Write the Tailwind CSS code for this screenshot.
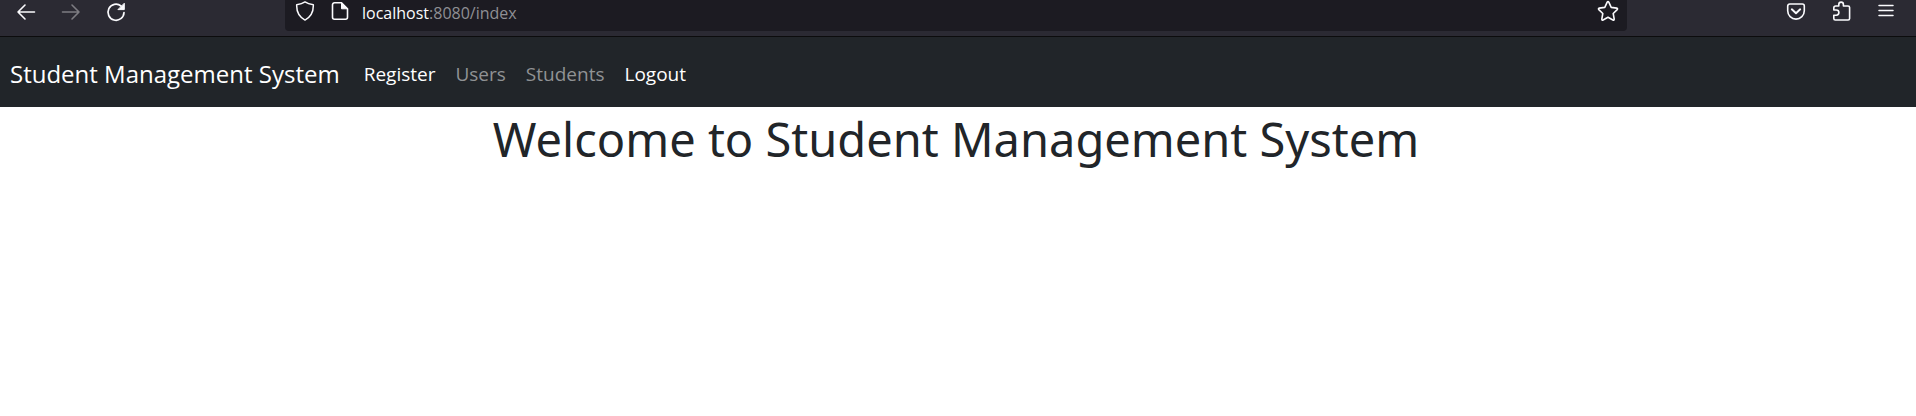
<!DOCTYPE html>
<html lang="en">
<head>
<meta charset="utf-8">
<title>Student Management System</title>
<script src="https://cdn.jsdelivr.net/npm/@tailwindcss/browser@4"></script>
</head>
<body class="min-h-screen bg-white font-['Segoe_UI','Open_Sans',sans-serif] text-[#212529]">
<header class="flex h-[37px] items-start border-b border-[#0c0c0d] bg-[#2b2a33] text-[#fbfbfe]">
  <div class="flex gap-px pl-1">
    <button aria-label="Back" class="flex h-6 w-11 items-center justify-center"><svg class="size-5" viewBox="0 0 20 20" fill="none" stroke="currentColor" stroke-width="1.6" stroke-linecap="round" stroke-linejoin="round"><path d="M18.500 10H2M9 3L2 10l7 7"/></svg></button>
    <button aria-label="Forward" disabled class="flex h-6 w-11 items-center justify-center text-[#7d7c82]"><svg class="size-5" viewBox="0 0 20 20" fill="none" stroke="currentColor" stroke-width="1.6" stroke-linecap="round" stroke-linejoin="round"><path d="M1.500 10H18M11 3l7 7-7 7"/></svg></button>
    <button aria-label="Reload" class="flex h-6 w-11 items-center justify-center"><svg class="size-5" viewBox="0 0 20 20" fill="none" stroke="currentColor" stroke-width="1.700" stroke-linecap="round"><path d="M18 10.500A8 8 0 1 1 15 4"/><path d="M18.300 1.600v6h-6z" fill="currentColor" stroke-width="1" stroke-linejoin="round"/></svg></button>
  </div>
  <div class="mx-[147px] flex h-[31px] flex-1 items-start rounded-b bg-[#1c1b22]">
    <button aria-label="Site protection" class="ml-2.5 flex h-[22px] w-5 items-center justify-center"><svg class="size-5" viewBox="0 0 20 20" fill="none" stroke="currentColor" stroke-width="1.500" stroke-linejoin="round"><path d="M10 .9C7.700 2.500 4.800 3.300 1.700 3.700c-.3 6.400 1.500 11.800 8.300 15.400 6.800-3.600 8.600-9 8.300-15.400C15.200 3.300 12.300 2.500 10 .9z"/></svg></button>
    <button aria-label="Site information" class="ml-[15px] flex h-[22px] w-5 items-center justify-center"><svg class="size-5" viewBox="0 0 20 20" fill="none" stroke="currentColor" stroke-width="1.600" stroke-linejoin="round"><path d="M11.500 1.800H4.500a2 2 0 0 0-2 2v12.400a2 2 0 0 0 2 2h11a2 2 0 0 0 2-2V7.800z"/><path d="M11.500 1.800v6h6z" fill="currentColor" stroke-width="1"/></svg></button>
    <a href="#" class="ml-3 text-base leading-[26px] text-[#8f8f94]"><span class="text-[#fbfbfe]">localhost</span>:8080/index</a>
    <button aria-label="Bookmark this page" class="mr-2 ml-auto flex h-[22px] w-[22px] items-center justify-center"><svg class="size-[22px]" viewBox="0 0 22 22" fill="none" stroke="currentColor" stroke-width="1.600" stroke-linejoin="round"><path d="M10.200 2.200q.8-1.300 1.600 0L14.200 7.400l5.500.7q1.400.4.5 1.500l-4 3.900 1 5.600q0 1.400-1.300.9L11 17.300 6.100 20q-1.300.5-1.300-.9l1-5.600-4-3.900q-.9-1.100.5-1.500l5.500-.7z"/></svg></button>
  </div>
  <div class="flex gap-px pr-2">
    <button aria-label="Save to Pocket" class="flex h-[22px] w-11 items-center justify-center"><svg class="size-5" viewBox="0 0 20 20" fill="none" stroke="currentColor" stroke-width="1.600" stroke-linecap="round" stroke-linejoin="round"><path d="M3.700 3h12.600a2 2 0 0 1 2 2v4.800a8.300 8.300 0 0 1-16.600 0V5a2 2 0 0 1 2-2z"/><path d="M5.800 8.300L10 12.300l4.200-4" stroke-width="1.900"/></svg></button>
    <button aria-label="Extensions" class="flex h-[22px] w-11 items-center justify-center"><svg class="size-5" viewBox="0 0 20 20" fill="none" stroke="currentColor" stroke-width="1.600" stroke-linejoin="round"><path d="M2.800 9V7a2 2 0 0 1 2-2H7.800V3.400a2.300 2.300 0 0 1 4.600 0V5H17.100a1.500 1.500 0 0 1 1.500 1.500v11a1.500 1.500 0 0 1-1.500 1.500H4.300a1.500 1.500 0 0 1-1.500-1.500v-3.300h2.500a2.600 2.600 0 0 0 0-5.200z"/></svg></button>
    <button aria-label="Open menu" class="flex h-[22px] w-11 items-center justify-center"><svg class="h-5 w-4" viewBox="0 0 16 20" fill="none" stroke="currentColor" stroke-width="1.500" stroke-linecap="round"><path d="M1 4.500h14M1 9.500h14M1 14.500h14"/></svg></button>
  </div>
</header>
<nav class="flex h-[70px] items-center bg-[#212529] px-2.5 pt-1 text-white">
  <a href="#" class="text-2xl">Student Management System</a>
  <ul class="ml-3.5 flex text-[19px] leading-[30px]">
    <li><a href="#" class="block px-2.5">Register</a></li>
    <li><a href="#" class="block px-2.5 text-[#909294]">Users</a></li>
    <li><a href="#" class="block px-2.5 text-[#909294]">Students</a></li>
    <li><a href="#" class="block px-2.5">Logout</a></li>
  </ul>
</nav>
<main class="pr-5 pl-4">
  <h1 class="pt-0.5 text-center font-['Segoe_UI','Noto_Sans',sans-serif] text-[47px] leading-[60px]">Welcome to Student Management System</h1>
</main>
</body>
</html>
